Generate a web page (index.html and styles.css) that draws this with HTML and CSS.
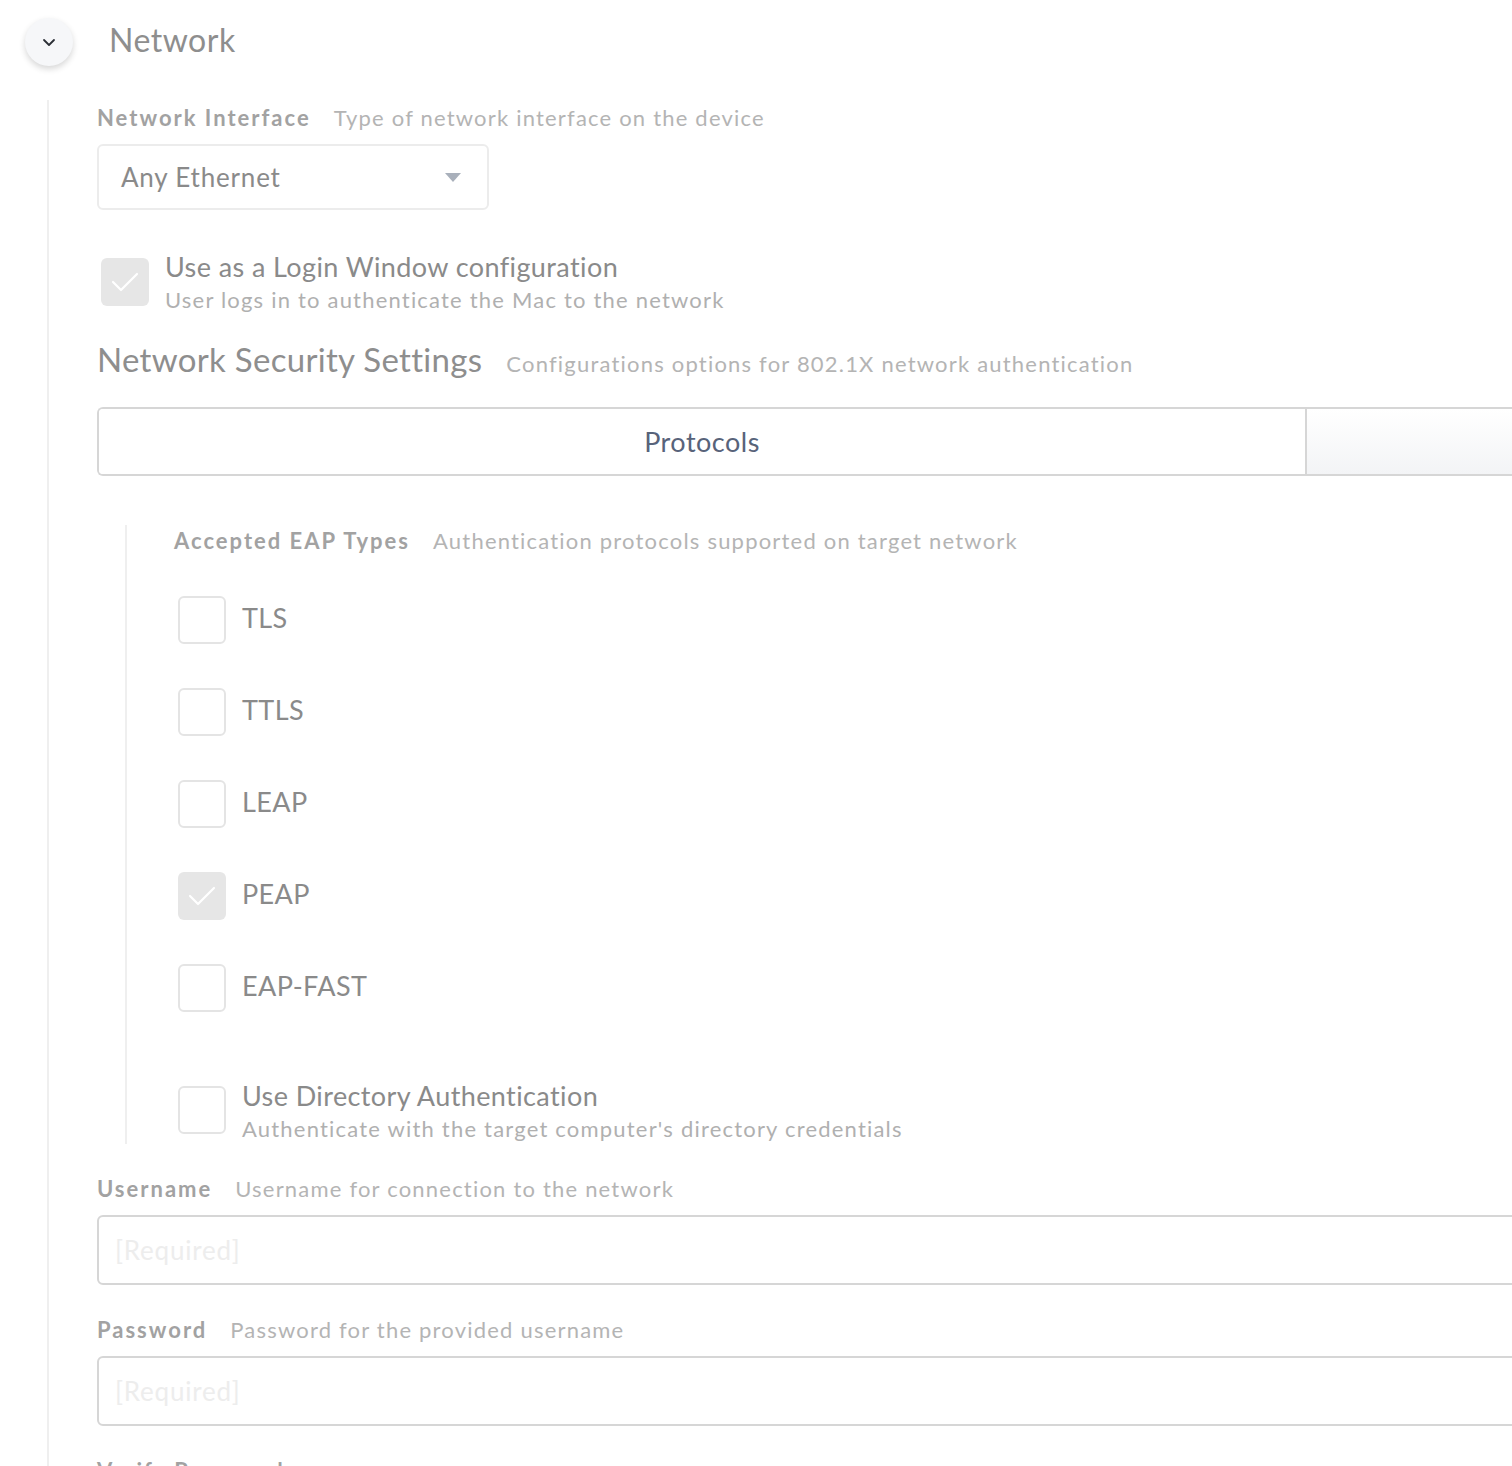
FILE: index.html
```html
<!DOCTYPE html>
<html lang="en">
<head>
    <meta charset="UTF-8">
    <meta name="viewport" content="width=device-width, initial-scale=1.0">
    <title>Network</title>
    <link rel="stylesheet" href="styles.css">
</head>
<body>

<header class="section-head">
    <button class="toggle" type="button">
        <svg width="14" height="9" viewBox="0 0 14 9"><path d="M2 2l5 5 5-5" fill="none" stroke="#2b2f36" stroke-width="1.8" stroke-linecap="round" stroke-linejoin="round"/></svg>
    </button>
    <h1>Network</h1>
</header>

<main class="section-body">
    <div class="field">
        <div class="label-row"><span class="label">Network Interface</span><span class="desc">Type of network interface on the device</span></div>
        <div class="select">
            <span>Any Ethernet</span>
            <span class="caret"></span>
        </div>
    </div>

    <div class="check-row login">
        <span class="box checked">
            <svg width="48" height="48" viewBox="0 0 48 48"><path d="M12 24l8 8 16-16" fill="none" stroke="#fff" stroke-width="2.2" stroke-linecap="round" stroke-linejoin="round"/></svg>
        </span>
        <div class="check-text">
            <div class="check-title">Use as a Login Window configuration</div>
            <div class="check-sub">User logs in to authenticate the Mac to the network</div>
        </div>
    </div>

    <div class="group-head">
        <h2>Network Security Settings</h2>
        <span class="desc">Configurations options for 802.1X network authentication</span>
    </div>

    <div class="tabs">
        <div class="tab active">Protocols</div>
        <div class="tab"></div>
    </div>

    <div class="sub-section">
        <div class="label-row"><span class="label">Accepted EAP Types</span><span class="desc">Authentication protocols supported on target network</span></div>

        <div class="eap-list">
            <div class="check-row"><span class="box"></span><span class="check-title">TLS</span></div>
            <div class="check-row"><span class="box"></span><span class="check-title">TTLS</span></div>
            <div class="check-row"><span class="box"></span><span class="check-title">LEAP</span></div>
            <div class="check-row"><span class="box checked"><svg width="48" height="48" viewBox="0 0 48 48"><path d="M12 24l8 8 16-16" fill="none" stroke="#fff" stroke-width="2.2" stroke-linecap="round" stroke-linejoin="round"/></svg></span><span class="check-title">PEAP</span></div>
            <div class="check-row"><span class="box"></span><span class="check-title">EAP-FAST</span></div>
        </div>

        <div class="check-row directory">
            <span class="box"></span>
            <div class="check-text">
                <div class="check-title">Use Directory Authentication</div>
                <div class="check-sub">Authenticate with the target computer's directory credentials</div>
            </div>
        </div>
    </div>

    <div class="field">
        <div class="label-row"><span class="label">Username</span><span class="desc">Username for connection to the network</span></div>
        <input class="text-input" type="text" placeholder="[Required]">
    </div>

    <div class="field">
        <div class="label-row"><span class="label">Password</span><span class="desc">Password for the provided username</span></div>
        <input class="text-input" type="password" placeholder="[Required]">
    </div>

    <div class="field">
        <div class="label-row"><span class="label">Verify Password</span><span class="desc"></span></div>
    </div>
</main>

</body>
</html>
```

FILE: styles.css
```css
/* reset */
* {
    margin: 0;
    padding: 0;
    box-sizing: border-box;
}

html, body {
    overflow: hidden;
}

body {
    font-family: Lato, "Open Sans", Arial, sans-serif;
    background: #fff;
    color: #888;
    width: 1800px;
    height: 1466px;
}

/* section header */
.section-head {
    display: flex;
    align-items: center;
    height: 84px;
    padding-left: 25px;
}

.toggle {
    width: 48px;
    height: 48px;
    border-radius: 50%;
    border: none;
    background: #f6f7f9;
    box-shadow: 0 3px 6px rgba(0,0,0,0.16);
    display: flex;
    align-items: center;
    justify-content: center;
    cursor: pointer;
}

h1 {
    font-weight: 400;
    font-size: 32px;
    color: #8e8e8e;
    margin-left: 36px;
    margin-bottom: 6px;
    letter-spacing: 0.5px;
}

/* body with left rule */
.section-body {
    margin-left: 47px;
    margin-top: 16px;
    border-left: 2px solid #efefef;
    padding-left: 48px;
    padding-top: 2px;
}

.label-row {
    display: flex;
    align-items: center;
    gap: 23px;
    height: 30px;
}

.label {
    font-weight: 700;
    font-size: 22px;
    color: #a2a2a2;
    letter-spacing: 2px;
}

.desc {
    font-size: 22px;
    color: #b4b4b4;
    letter-spacing: 1.2px;
}

.field {
    margin-bottom: 29px;
}

.field .label-row {
    margin-bottom: 12px;
}

/* select */
.select {
    width: 392px;
    height: 66px;
    border: 2px solid #ececec;
    border-radius: 6px;
    display: flex;
    align-items: center;
    justify-content: space-between;
    padding: 0 26px 0 22px;
    font-size: 26px;
    color: #8a8a8a;
    letter-spacing: 0.8px;
}

.caret {
    width: 0;
    height: 0;
    border-left: 8px solid transparent;
    border-right: 8px solid transparent;
    border-top: 9px solid #a9b0bb;
}

/* checkboxes */
.check-row {
    display: flex;
    align-items: flex-start;
    gap: 16px;
}

.box {
    flex: none;
    width: 48px;
    height: 48px;
    border: 2px solid #e4e4e4;
    border-radius: 6px;
    display: flex;
    align-items: center;
    justify-content: center;
}

.box.checked {
    background: #e6e6e6;
    border: none;
}

.check-title {
    font-size: 27px;
    color: #8a8a8a;
    letter-spacing: 0.4px;
    line-height: 30px;
}

.check-sub {
    font-size: 22px;
    color: #b0b0b0;
    letter-spacing: 1.2px;
    line-height: 30px;
    margin-top: 3px;
}

.login {
    margin-left: 4px;
    margin-top: 48px;
}

.login .check-title {
    margin-top: -6px;
}

/* security settings */
.group-head {
    display: flex;
    align-items: baseline;
    gap: 24px;
    margin-top: 24px;
}

h2 {
    font-weight: 400;
    font-size: 33px;
    color: #8e8e8e;
    letter-spacing: 0.3px;
}

.tabs {
    display: flex;
    margin-top: 28px;
    height: 69px;
    border: 2px solid #d6d6d6;
    border-right: none;
    border-radius: 6px 0 0 6px;
    overflow: hidden;
}

.tab {
    flex: 1;
    display: flex;
    align-items: center;
    justify-content: center;
    font-size: 27px;
    color: #58637a;
    letter-spacing: 0.5px;
    background: linear-gradient(#fff, #f3f4f6);
    border-left: 2px solid #d6d6d6;
}

.tab.active {
    flex: none;
    width: 1206px;
    background: #fff;
    border-left: none;
}

/* nested section */
.sub-section {
    margin: 49px 0 29px 28px;
    border-left: 2px solid #efefef;
    padding: 0 0 0 47px;
}

.eap-list {
    display: flex;
    flex-direction: column;
    gap: 44px;
    margin-top: 41px;
    margin-left: 4px;
}

.eap-list .check-row {
    align-items: center;
}

.eap-list .check-title {
    margin-top: -5px;
}

.directory {
    margin-top: 74px;
    margin-left: 4px;
}

.directory .check-title {
    margin-top: -5px;
}

/* text inputs */
.text-input {
    display: block;
    width: 1500px;
    height: 70px;
    border: 2px solid #d6d6d6;
    border-radius: 6px;
    padding: 0 16px;
    font-family: inherit;
    font-size: 26px;
    color: #888;
    outline: none;
}

.text-input::placeholder {
    color: #ededed;
    letter-spacing: 0.8px;
}
```
